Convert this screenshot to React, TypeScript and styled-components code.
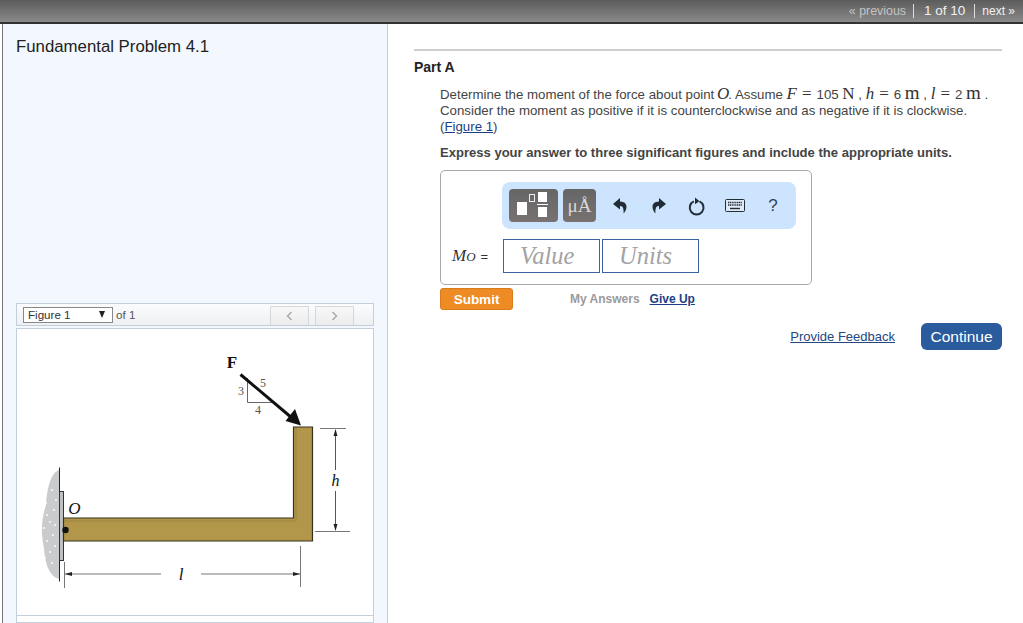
import React from "react";
import styled, { createGlobalStyle } from "styled-components";

const Global = createGlobalStyle`
  html, body {
    margin: 0;
    height: 100%;
    background: #fff;
    overflow: hidden;
  }
  body {
    font-family: "Liberation Sans", Arial, sans-serif;
    color: #333;
  }
`;

const Page = styled.div`
  width: 1023px;
  height: 623px;
  display: flex;
  flex-direction: column;
  overflow: hidden;
`;

const TopBar = styled.div`
  height: 22px;
  flex: none;
  display: flex;
  justify-content: flex-end;
  align-items: center;
  padding-right: 8px;
  background: linear-gradient(#5c5c5c, #8a8a8a);
  border-bottom: 2px solid #333;
`;

const PagerItem = styled.span<{ $tone: string; $size: number; $left: number; $right: number; $divider?: boolean }>`
  color: ${(p) => p.$tone};
  font-size: ${(p) => p.$size}px;
  padding: 0 ${(p) => p.$right}px 0 ${(p) => p.$left}px;
  line-height: 14px;
  border-left: ${(p) => (p.$divider ? "1px solid #ddd" : "none")};
`;

const Columns = styled.div`
  flex: 1;
  display: flex;
  min-height: 0;
`;

const SidePanel = styled.aside`
  width: 386px;
  margin-left: 2px;
  flex: none;
  box-sizing: border-box;
  background: #f2f8fd;
  border-left: 1px solid #777;
  border-right: 1px solid #c3d0dc;
  padding: 13px 13px 0 13px;
  display: flex;
  flex-direction: column;
`;

const ProblemTitle = styled.h1`
  margin: 0;
  font-size: 16.8px;
  line-height: 20px;
  font-weight: 400;
  color: #222;
`;

const FigureBar = styled.div`
  margin-top: 246px;
  height: 23px;
  flex: none;
  display: flex;
  align-items: center;
  padding: 0 19px 0 6px;
  background: linear-gradient(#fbfcfd, #eef0f2);
  border: 1px solid #c3d0dc;
  box-sizing: border-box;
  font-size: 11.6px;
  color: #555;
`;

const FigureSelect = styled.div`
  width: 90px;
  height: 16px;
  box-sizing: border-box;
  border: 1px solid #888;
  background: #fff;
  color: #333;
  display: flex;
  align-items: center;
  justify-content: space-between;
  padding: 0 7px 0 4px;
  margin-right: 3px;
`;

const SelectCaret = styled.span`
  width: 0;
  height: 0;
  border-left: 3.5px solid transparent;
  border-right: 3.5px solid transparent;
  border-top: 7px solid #222;
`;

const PagerButtons = styled.div`
  margin-left: auto;
  align-self: flex-end;
  display: flex;
  gap: 6px;
`;

const PagerButton = styled.div`
  width: 39px;
  height: 19px;
  box-sizing: border-box;
  border: 1px solid #d5d8da;
  border-bottom: none;
  background: linear-gradient(#f8f8f8, #ececec);
  display: flex;
  align-items: center;
  justify-content: center;
  color: #aaa;
`;

const FigureCard = styled.div`
  margin-top: 2px;
  height: 288px;
  flex: none;
  box-sizing: border-box;
  background: #fff;
  border: 1px solid #c3d0dc;
`;

const FigureFooter = styled.div`
  flex: 1;
  background: #fff;
  border: 1px solid #c3d0dc;
  border-top: none;
`;

const Main = styled.main`
  flex: 1;
  min-width: 0;
  padding: 25px 21px 0 26px;
`;

const Rule = styled.div`
  height: 2px;
  background: #cfcfcf;
`;

const PartTitle = styled.h2`
  margin: 7px 0 0;
  font-size: 14px;
  line-height: 18px;
  font-weight: 700;
  color: #222;
`;

const Question = styled.section`
  padding-left: 26px;
  margin-top: 9px;
`;

const Prompt = styled.p`
  margin: 0;
  font-size: 13.28px;
  line-height: 16px;
  color: #444;
  white-space: nowrap;
`;

const Mathy = styled.span<{ $italic?: boolean; $gap?: number; $size?: number }>`
  font-family: "Liberation Serif", "Times New Roman", serif;
  font-style: ${(p) => (p.$italic ? "italic" : "normal")};
  font-size: ${(p) => p.$size ?? 17}px;
  line-height: 16px;
  color: #333;
  margin: 0 ${(p) => p.$gap ?? 0}px;
`;

const InlineLink = styled.a`
  color: #1c3f87;
  text-decoration: underline;
`;

const Instruction = styled.p`
  margin: 10px 0 0;
  font-size: 13.05px;
  line-height: 16px;
  font-weight: 700;
  color: #444;
`;

const AnswerBox = styled.div`
  margin-top: 9px;
  width: 372px;
  height: 115px;
  box-sizing: border-box;
  border: 1px solid #aaa;
  border-radius: 5px;
  padding: 11px 15px 0 11px;
`;

const Toolbar = styled.div`
  margin-left: 50px;
  height: 47px;
  box-sizing: border-box;
  background: #cce4fd;
  border-radius: 8px;
  display: flex;
  align-items: center;
  padding-left: 7px;
`;

const ToolButton = styled.div<{ $wide?: boolean }>`
  width: ${(p) => (p.$wide ? 49 : 33)}px;
  height: 33px;
  margin-right: ${(p) => (p.$wide ? 5 : 0)}px;
  border-radius: 4px;
  background: linear-gradient(#656565, #787272);
  display: flex;
  align-items: center;
  justify-content: center;
  flex: none;
`;

const UnitGlyph = styled.span`
  font-family: "Liberation Serif", serif;
  font-size: 19px;
  color: #d8d8d8;
`;

const ToolIcon = styled.div<{ $width: number }>`
  width: ${(p) => p.$width}px;
  flex: none;
  display: flex;
  justify-content: center;
  align-items: center;
  color: #222c36;
`;

const HelpMark = styled.span`
  font-size: 17px;
  color: #2f4256;
`;

const EntryRow = styled.div`
  margin-top: 10px;
  display: flex;
  align-items: center;
`;

const SymbolLabel = styled.div`
  width: 51px;
  flex: none;
  font-size: 13px;
  color: #333;
  white-space: nowrap;
`;

const LabelItalic = styled.span`
  font-family: "Liberation Serif", serif;
  font-style: italic;
  font-size: 17px;
`;

const LabelSub = styled.span`
  font-family: "Liberation Serif", serif;
  font-style: italic;
  font-size: 13px;
  margin-right: 5px;
`;

const EntryField = styled.div`
  width: 97px;
  height: 34px;
  box-sizing: border-box;
  border: 1px solid #3b62a0;
  margin-right: 2px;
  padding-left: 16px;
  display: flex;
  align-items: center;
  font-family: "Liberation Serif", serif;
  font-style: italic;
  font-size: 24.5px;
  color: #a3a3a3;
`;

const ActionRow = styled.div`
  margin-top: 3px;
  display: flex;
  align-items: center;
`;

const SubmitButton = styled.div`
  width: 73px;
  height: 22px;
  box-sizing: border-box;
  background: #ee8b24;
  border: 1px solid #d87c1e;
  border-radius: 3px;
  color: #fff;
  font-size: 13.5px;
  font-weight: 700;
  display: flex;
  align-items: center;
  justify-content: center;
  margin-right: 57px;
`;

const MutedAction = styled.span`
  font-size: 12px;
  font-weight: 700;
  color: #9a9a9a;
  margin-right: 10px;
`;

const StrongLink = styled.a`
  font-size: 12px;
  font-weight: 700;
  color: #1c3f87;
  text-decoration: underline;
`;

const FooterRow = styled.div`
  margin-top: 13px;
  display: flex;
  justify-content: flex-end;
  align-items: center;
`;

const FeedbackLink = styled.a`
  font-size: 13px;
  color: #24477f;
  text-decoration: underline;
  margin-right: 26px;
`;

const ContinueButton = styled.div`
  width: 81px;
  height: 27px;
  box-sizing: border-box;
  border-radius: 6px;
  background: #2a5b9d;
  color: #fff;
  font-size: 15.5px;
  display: flex;
  align-items: center;
  justify-content: center;
`;

const Diagram = styled.svg`
  display: block;
`;

const DiagramLabel = styled.text<{ $size: number; $weight?: number; $italic?: boolean; $tone?: string }>`
  font-family: "Liberation Serif", serif;
  font-size: ${(p) => p.$size}px;
  font-weight: ${(p) => p.$weight ?? 400};
  font-style: ${(p) => (p.$italic ? "italic" : "normal")};
  fill: ${(p) => p.$tone ?? "#111"};
  text-anchor: middle;
`;

// white flecks in the rough wall texture
const flecks = [
  [48, 478], [52, 490], [46, 503], [54, 510], [47, 515], [50, 522], [55, 525], [44, 528],
  [53, 535], [47, 541], [55, 546], [50, 552], [45, 558], [52, 563], [48, 570], [56, 500],
];

const BeamFigure = () => (
  <Diagram width="356" height="286" viewBox="17 329 356 286">
    <path
      d="M59 470 C50 473 47 490 46 505 C41 520 41 535 44 548 C45 565 50 577 59 579 Z"
      fill="#c9cbcd"
    />
    {flecks.map(([x, y]) => (
      <circle key={`${x}-${y}`} cx={x} cy={y} r="0.9" fill="#fff" />
    ))}
    <path d="M59.5 467.5V581.5" stroke="#222" strokeWidth="1" />
    <rect x="59.5" y="491.5" width="4" height="69" fill="#bfc0c2" stroke="#333" strokeWidth="1" />

    {/* bent bar */}
    <path
      d="M63.5 518H293.5V427H312.5V541H63.5Z"
      fill="#b2964a"
      stroke="#37321f"
      strokeWidth="1.2"
    />
    <path d="M64 521H296V428" fill="none" stroke="#9a8340" strokeWidth="1" />
    <circle cx="65.5" cy="530" r="3.2" fill="#111" />
    <DiagramLabel x="74.5" y="513.5" $size={17} $italic>
      O
    </DiagramLabel>

    {/* slope triangle and force arrow */}
    <path d="M247.5 378V402.5H273" fill="none" stroke="#666" strokeWidth="1" />
    <path d="M240.5 374.5L292 418" stroke="#111" strokeWidth="3" />
    <path d="M301 425.5L285.5 421L295 409Z" fill="#111" />
    <DiagramLabel x="232" y="368" $size={17} $weight={700}>
      F
    </DiagramLabel>
    <DiagramLabel x="241" y="395" $size={12} $tone="#555">
      3
    </DiagramLabel>
    <DiagramLabel x="263" y="387" $size={12} $tone="#555">
      5
    </DiagramLabel>
    <DiagramLabel x="258" y="414" $size={12} $tone="#555">
      4
    </DiagramLabel>

    {/* height dimension */}
    <path d="M320 428.5H346M315 531.5H350" stroke="#777" strokeWidth="1" />
    <path d="M335.5 430V470M335.5 491V530" stroke="#555" strokeWidth="1" />
    <path d="M335.5 429L333.5 436H337.5ZM335.5 531L333.5 524H337.5Z" fill="#222" />
    <DiagramLabel x="335.5" y="486" $size={16} $italic>
      h
    </DiagramLabel>

    {/* length dimension */}
    <path d="M64.5 562V588M300.5 546V587" stroke="#777" strokeWidth="1" />
    <path d="M65 574H161M201 574H300" stroke="#777" strokeWidth="1" />
    <path d="M65 574L72 572V576ZM300 574L293 572V576Z" fill="#222" />
    <DiagramLabel x="181" y="580" $size={17} $italic>
      l
    </DiagramLabel>
  </Diagram>
);

const TemplateIcon = () => (
  <svg width="36" height="28" viewBox="0 0 36 28">
    <rect x="1" y="10" width="10" height="13" fill="#fff" />
    <rect x="13.5" y="2.5" width="5" height="7" fill="none" stroke="#eee" strokeWidth="1" />
    <rect x="22" y="0" width="9" height="10" fill="#fff" />
    <rect x="21" y="12" width="11" height="1" fill="#fff" />
    <rect x="22" y="15" width="9" height="10" fill="#fff" />
  </svg>
);

const ArrowIcon = ({ flip }: { flip?: boolean }) => (
  <svg width="15" height="16" viewBox="0 0 15 16" style={flip ? { transform: "scaleX(-1)" } : undefined}>
    <path d="M7 0L0 6L7 11.5V8C10 8 10.8 10.5 10.6 15.5C14.5 11 15.5 3.6 7 3.4Z" fill="currentColor" />
  </svg>
);

const ResetIcon = () => (
  <svg width="18" height="20" viewBox="0 0 18 20">
    <path d="M11.5 5.4A6.9 6.9 0 1 1 5.8 5.4" fill="none" stroke="currentColor" strokeWidth="2" />
    <path d="M7 1.5L11.5 5.2L7 8.2Z" fill="currentColor" />
  </svg>
);

const KeyboardIcon = () => (
  <svg width="20" height="13" viewBox="0 0 20 13">
    <rect x="0.5" y="0.5" width="19" height="12" rx="1" fill="#dfeaf5" stroke="currentColor" />
    <path d="M3 3.5H17M3 6H17" stroke="currentColor" strokeWidth="1.4" strokeDasharray="1.2 0.6" />
    <path d="M5 9.5H15" stroke="currentColor" strokeWidth="1.4" />
  </svg>
);

const Chevron = ({ flip }: { flip?: boolean }) => (
  <svg width="7" height="10" viewBox="0 0 7 10" style={flip ? { transform: "scaleX(-1)" } : undefined}>
    <path d="M5.5 1L1.5 5L5.5 9" fill="none" stroke="currentColor" strokeWidth="1.5" />
  </svg>
);

export default function App() {
  return (
    <Page>
      <Global />
      <TopBar>
        <PagerItem $tone="#c4c4c4" $size={12.4} $left={0} $right={7}>
          « previous
        </PagerItem>
        <PagerItem $tone="#f2f2f2" $size={13.5} $left={10} $right={9} $divider>
          1 of 10
        </PagerItem>
        <PagerItem $tone="#f2f2f2" $size={12} $left={7} $right={0} $divider>
          next »
        </PagerItem>
      </TopBar>
      <Columns>
        <SidePanel>
          <ProblemTitle>Fundamental Problem 4.1</ProblemTitle>
          <FigureBar>
            <FigureSelect>
              Figure 1
              <SelectCaret />
            </FigureSelect>
            of 1
            <PagerButtons>
              <PagerButton>
                <Chevron />
              </PagerButton>
              <PagerButton>
                <Chevron flip />
              </PagerButton>
            </PagerButtons>
          </FigureBar>
          <FigureCard>
            <BeamFigure />
          </FigureCard>
          <FigureFooter />
        </SidePanel>
        <Main>
          <Rule />
          <PartTitle>Part A</PartTitle>
          <Question>
            <Prompt>
              Determine the moment of the force about point <Mathy $italic $gap={-1}>O</Mathy>. Assume{" "}
              <Mathy $italic>F</Mathy>
              <Mathy $gap={5}>=</Mathy>105 <Mathy>N</Mathy> , <Mathy $italic>h</Mathy>
              <Mathy $gap={5}>=</Mathy>6 <Mathy $size={19}>m</Mathy> , <Mathy $italic>l</Mathy>
              <Mathy $gap={5}>=</Mathy>2 <Mathy $size={19}>m</Mathy> .
              <br />
              Consider the moment as positive if it is counterclockwise and as negative if it is clockwise.
              <br />
              (<InlineLink>Figure 1</InlineLink>)
            </Prompt>
            <Instruction>Express your answer to three significant figures and include the appropriate units.</Instruction>
            <AnswerBox>
              <Toolbar>
                <ToolButton $wide>
                  <TemplateIcon />
                </ToolButton>
                <ToolButton>
                  <UnitGlyph>μÅ</UnitGlyph>
                </ToolButton>
                <ToolIcon $width={48}>
                  <ArrowIcon />
                </ToolIcon>
                <ToolIcon $width={28}>
                  <ArrowIcon flip />
                </ToolIcon>
                <ToolIcon $width={49}>
                  <ResetIcon />
                </ToolIcon>
                <ToolIcon $width={27}>
                  <KeyboardIcon />
                </ToolIcon>
                <ToolIcon $width={50}>
                  <HelpMark>?</HelpMark>
                </ToolIcon>
              </Toolbar>
              <EntryRow>
                <SymbolLabel>
                  <LabelItalic>M</LabelItalic>
                  <LabelSub>O</LabelSub>=
                </SymbolLabel>
                <EntryField>Value</EntryField>
                <EntryField>Units</EntryField>
              </EntryRow>
            </AnswerBox>
            <ActionRow>
              <SubmitButton>Submit</SubmitButton>
              <MutedAction>My Answers</MutedAction>
              <StrongLink>Give Up</StrongLink>
            </ActionRow>
          </Question>
          <FooterRow>
            <FeedbackLink>Provide Feedback</FeedbackLink>
            <ContinueButton>Continue</ContinueButton>
          </FooterRow>
        </Main>
      </Columns>
    </Page>
  );
}
